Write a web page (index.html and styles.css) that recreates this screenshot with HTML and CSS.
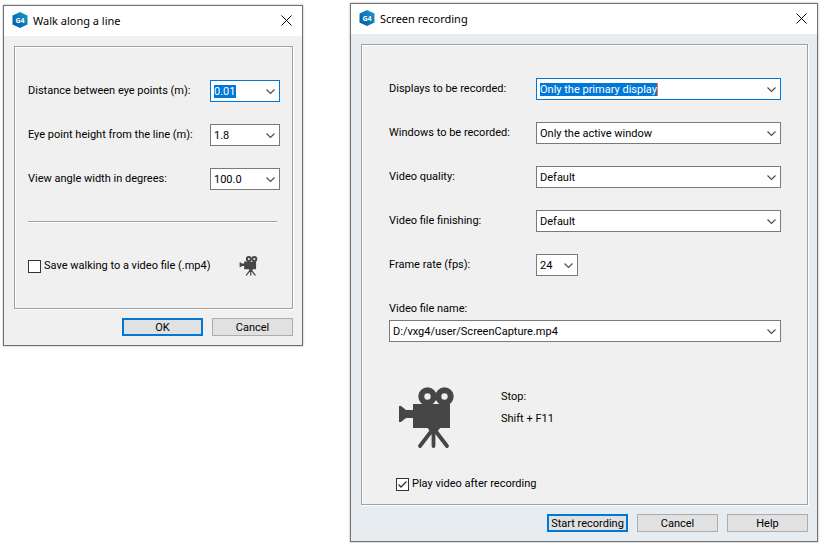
FILE: index.html
```html
<!DOCTYPE html>
<html lang="en">
<head>
<meta charset="utf-8">
<title>Walk along a line</title>
<link rel="stylesheet" href="styles.css">
</head>
<body>
<svg class="defs" aria-hidden="true">
  <defs>
    <linearGradient id="hex" x1="0" y1="1" x2="1" y2="0">
      <stop offset="0" stop-color="#00589c"/>
      <stop offset="1" stop-color="#1b9ad2"/>
    </linearGradient>
    <symbol id="camera" viewBox="0 0 55 62">
      <g fill="none" stroke="#464646">
        <circle cx="28.500" cy="9.500" r="6.200" stroke-width="6"/>
        <circle cx="45.500" cy="9.500" r="6.200" stroke-width="6"/>
        <path d="M34 42 21 59M34.500 42V59M35 42 48 59" stroke-width="3.800" stroke-linecap="round"/>
      </g>
      <path fill="#464646" d="M14 17H51V41H14V31H7L2 35H0V19H2L7 23H14ZM28 40H42L37 46H32Z"/>
      <path fill="#f0f0f0" d="M37 14 39.500 17H34.500Z"/>
    </symbol>
  </defs>
</svg>
<main class="desktop">
  <section class="dialog" aria-labelledby="walk-title">
    <header class="titlebar">
      <svg class="logo" viewBox="0 0 16 16" aria-hidden="true">
        <path fill="url(#hex)" d="M8 0 15.500 3.500V12.500L8 16 .5 12.500V3.500Z"/>
        <text x="8" y="11" text-anchor="middle">G4</text>
      </svg>
      <h1 class="title" id="walk-title">Walk along a line</h1>
      <button class="close" type="button" aria-label="Close"><svg viewBox="0 0 11 11"><path d="M.5 .5 10.500 10.500M10.500 .5 .5 10.500"/></svg></button>
    </header>
    <form class="body">
      <div class="panel panel-walk">
        <div class="fields fields-walk">
          <label for="distance">Distance between eye points (m):</label>
          <select class="combo active active-number" id="distance"><option>0.01</option></select>
          <label for="height">Eye point height from the line (m):</label>
          <select class="combo" id="height"><option>1.8</option></select>
          <label for="angle">View angle width in degrees:</label>
          <select class="combo" id="angle"><option>100.0</option></select>
        </div>
        <hr class="rule">
        <div class="save">
          <label class="check"><input type="checkbox">Save walking to a video file (.mp4)</label>
          <svg class="camera-small" aria-hidden="true"><use href="#camera"/></svg>
        </div>
      </div>
      <div class="actions">
        <button class="btn primary" type="button">OK</button>
        <button class="btn" type="button">Cancel</button>
      </div>
    </form>
  </section>

  <section class="dialog dialog-record" aria-labelledby="record-title">
    <header class="titlebar">
      <svg class="logo" viewBox="0 0 16 16" aria-hidden="true">
        <path fill="url(#hex)" d="M8 0 15.500 3.500V12.500L8 16 .5 12.500V3.500Z"/>
        <text x="8" y="11" text-anchor="middle">G4</text>
      </svg>
      <h1 class="title" id="record-title">Screen recording</h1>
      <button class="close" type="button" aria-label="Close"><svg viewBox="0 0 11 11"><path d="M.5 .5 10.500 10.500M10.500 .5 .5 10.500"/></svg></button>
    </header>
    <form class="body">
      <div class="panel panel-record">
        <div class="fields fields-record">
          <label for="displays">Displays to be recorded:</label>
          <select class="combo active active-text" id="displays"><option>Only the primary display</option></select>
          <label for="windows">Windows to be recorded:</label>
          <select class="combo" id="windows"><option>Only the active window</option></select>
          <label for="quality">Video quality:</label>
          <select class="combo" id="quality"><option>Default</option></select>
          <label for="finishing">Video file finishing:</label>
          <select class="combo" id="finishing"><option>Default</option></select>
          <label for="rate">Frame rate (fps):</label>
          <select class="combo combo-short" id="rate"><option>24</option></select>
        </div>
        <div class="file">
          <label for="file">Video file name:</label>
          <select class="combo" id="file"><option>D:/vxg4/user/ScreenCapture.mp4</option></select>
        </div>
        <div class="hint">
          <svg class="camera-large" aria-hidden="true"><use href="#camera"/></svg>
          <div class="keys"><div>Stop:</div><div>Shift + F11</div></div>
        </div>
        <label class="check check-play"><input type="checkbox" checked>Play video after recording</label>
      </div>
      <div class="actions">
        <button class="btn primary" type="button">Start recording</button>
        <button class="btn" type="button">Cancel</button>
        <button class="btn" type="button">Help</button>
      </div>
    </form>
  </section>
</main>
</body>
</html>
```
FILE: styles.css
```css
* {
  box-sizing: border-box;
}

body {
  margin: 0;
  background: #fff;
  color: #000;
  font: 11px/16px Roboto, "Liberation Sans", sans-serif;
}

.defs {
  position: absolute;
  width: 0;
  height: 0;
}

.desktop {
  display: grid;
  grid-template-columns: 300fr 468fr;
  gap: 47px;
  align-items: start;
  padding: 3px 2px 1px 3px;
}

.dialog {
  margin-top: 2px;
  border: 1px solid #707070;
  background: #f0f0f0;
  box-shadow: 0 0 2px #aaa;
}

.dialog-record {
  margin-top: 0;
  background: #e6ecf0;
}

.titlebar {
  display: flex;
  align-items: center;
  height: 30px;
  padding: 0 10px 2px 8px;
  background: #fff;
}

.logo {
  width: 16px;
  height: 16px;
}

.logo text {
  fill: #fff;
  font: bold 7px "Open Sans", sans-serif;
}

.title {
  flex: 1;
  margin: 0 0 0 5px;
  padding-top: 1px;
  font: 11px/16px "Noto Sans", sans-serif;
}

.close {
  display: flex;
  padding: 0;
  border: 0;
  background: none;
}

.close svg {
  width: 11px;
  height: 11px;
  fill: none;
  stroke: #000;
}

.body {
  padding: 10px 9px 9px 10px;
}

.panel {
  border: 1px solid #a0a0a0;
  background: #f0f0f0;
  box-shadow: inset 1px 1px #fff, 1px 1px #fff;
}

.panel-walk {
  padding: 33px 12px 32px 13px;
}

.panel-record {
  padding: 33px 26px 12px 27px;
}

.fields {
  display: grid;
  row-gap: 22px;
}

.fields label {
  line-height: 22px;
}

.fields-walk {
  grid-template-columns: 1fr 70px;
}

.fields-record {
  grid-template-columns: 147px 1fr;
}

.combo {
  appearance: none;
  width: 100%;
  height: 22px;
  margin: 0;
  padding: 2px 20px 0 3px;
  border: 1px solid #7a7a7a;
  border-radius: 0;
  color: #000;
  font: inherit;
  background: url("data:image/svg+xml,%3Csvg xmlns='http://www.w3.org/2000/svg' width='9' height='6'%3E%3Cpath d='M.5 .5 4.500 4.500 8.500 .5' fill='none' stroke='%23505050' stroke-width='1.200'/%3E%3C/svg%3E") right 4px top 8px no-repeat #fff;
}

.combo-short {
  width: 42px;
}

.active {
  border-color: #0078d7;
  color: #fff;
  background-image: url("data:image/svg+xml,%3Csvg xmlns='http://www.w3.org/2000/svg' width='9' height='6'%3E%3Cpath d='M.5 .5 4.500 4.500 8.500 .5' fill='none' stroke='%23505050' stroke-width='1.200'/%3E%3C/svg%3E"), linear-gradient(#0078d7, #0078d7), linear-gradient(#ff7a20, #ff7a20);
  background-position: right 4px top 8px, 3px 4px, 120px 4px;
}

.active-number {
  background-size: auto, 22px 13px, 0 0;
}

.active-text {
  background-size: auto, 117px 13px, 1px 13px;
}

.rule {
  height: 2px;
  margin: 31px 3px 33px 0;
  border: 0;
  border-top: 1px solid #a0a0a0;
  background: #fff;
}

.save {
  display: flex;
  align-items: center;
  justify-content: space-between;
  padding-right: 22px;
}

.camera-small {
  width: 19px;
  height: 20px;
}

.check {
  display: flex;
  align-items: center;
  gap: 3px;
}

.check input {
  appearance: none;
  width: 13px;
  height: 13px;
  margin: 0;
  border: 1px solid #333;
  background: #fff;
}

.check input:checked {
  background: #fff url("data:image/svg+xml,%3Csvg xmlns='http://www.w3.org/2000/svg' width='11' height='11'%3E%3Cpath d='M1.500 5.500 4 8 9.500 2.500' fill='none' stroke='%23333' stroke-width='1.300'/%3E%3C/svg%3E") center no-repeat;
}

.file {
  display: grid;
  gap: 3px;
  margin-top: 25px;
}

.hint {
  display: flex;
  gap: 47px;
  align-items: end;
  height: 63px;
  margin-top: 44px;
  padding-left: 10px;
}

.camera-large {
  width: 55px;
  height: 62px;
}

.keys {
  align-self: start;
  line-height: 22px;
}

.check-play {
  margin-top: 27px;
  padding-left: 7px;
}

.actions {
  display: flex;
  justify-content: flex-end;
  gap: 9px;
  margin-top: 9px;
}

.btn {
  width: 81px;
  height: 18px;
  padding: 1px 0 0;
  border: 1px solid #adadad;
  background: #e1e1e1;
  color: #000;
  font: inherit;
  line-height: 14px;
  white-space: nowrap;
}

.primary {
  border: 2px solid #0078d7;
}
```
